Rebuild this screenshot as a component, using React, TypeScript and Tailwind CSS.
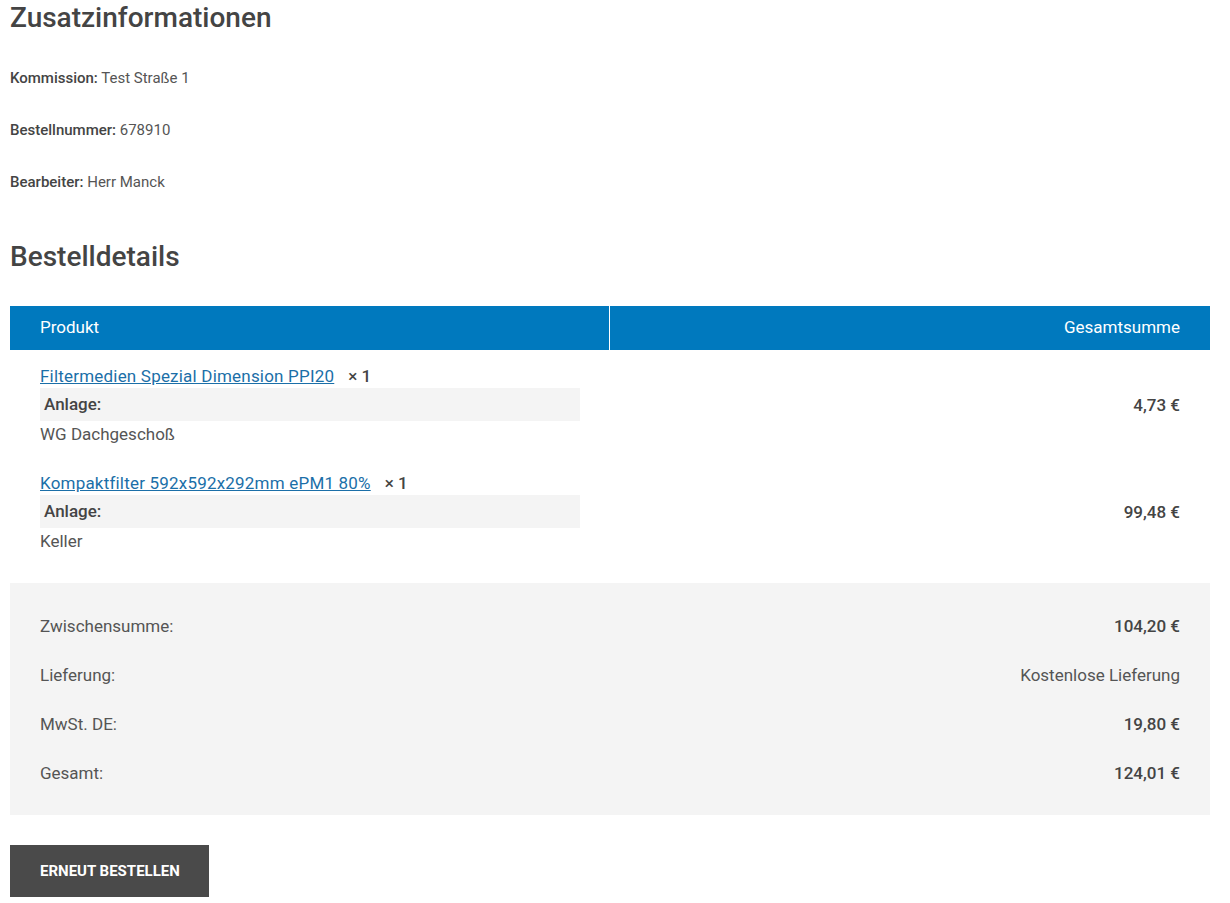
const items = [
  { name: 'Filtermedien Spezial Dimension PPI20', qty: 1, anlage: 'WG Dachgeschoß', total: '4,73 €' },
  { name: 'Kompaktfilter 592x592x292mm ePM1 80%', qty: 1, anlage: 'Keller', total: '99,48 €' },
]

const totals = [
  { label: 'Zwischensumme:', value: '104,20 €', bold: true },
  { label: 'Lieferung:', value: 'Kostenlose Lieferung', bold: false },
  { label: 'MwSt. DE:', value: '19,80 €', bold: true },
  { label: 'Gesamt:', value: '124,01 €', bold: true },
]

export default function App() {
  return (
    <div className="min-h-screen bg-white px-[10px] text-[#555] font-['Roboto','Open_Sans',sans-serif]">
      <h2 className="pt-[2px] text-[28px] leading-[32px] font-medium text-[#444]">Zusatzinformationen</h2>

      <div className="mt-[35px] flex flex-col gap-[34px] text-[15px] leading-[18px]">
        <p><strong className="font-medium text-[#444]">Kommission:</strong> Test Straße 1</p>
        <p><strong className="font-medium text-[#444]">Bestellnummer:</strong> 678910</p>
        <p><strong className="font-medium text-[#444]">Bearbeiter:</strong> Herr Manck</p>
      </div>

      <h2 className="mt-[50px] text-[28px] leading-[32px] font-medium text-[#444]">Bestelldetails</h2>

      <div className="mt-[33px] w-[1200px]">
        <div className="grid grid-cols-2 h-[44px] bg-[#0079be] text-white text-[17px]">
          <div className="flex items-center px-[30px] border-r border-white">Produkt</div>
          <div className="flex items-center justify-end px-[30px]">Gesamtsumme</div>
        </div>

        <div className="flex flex-col pt-[14px] pb-[29px] gap-[24px]">
          {items.map((it) => (
            <div key={it.name} className="flex items-center px-[30px] text-[17px]">
              <div className="w-[540px]">
                <div className="leading-[24px]">
                  <a href="#" className="text-[#1b6fa8] underline tracking-[0.2px]">{it.name}</a>
                  <span className="ml-[14px] font-medium text-[#444]">× {it.qty}</span>
                </div>
                <div className="bg-[#f4f4f4] h-[33px] flex items-center px-[4px] font-medium text-[#444]">Anlage:</div>
                <div className="leading-[26px]">{it.anlage}</div>
              </div>
              <div className="ml-auto font-medium text-[#444]">{it.total}</div>
            </div>
          ))}
        </div>

        <div className="bg-[#f4f4f4] px-[30px] pt-[31px] pb-[30px] flex flex-col gap-[25px] text-[17px]">
          {totals.map((t) => (
            <div key={t.label} className="flex justify-between leading-[24px]">
              <span>{t.label}</span>
              <span className={t.bold ? 'font-medium text-[#444]' : ''}>{t.value}</span>
            </div>
          ))}
        </div>
      </div>

      <button className="mt-[30px] h-[52px] w-[199px] pl-[30px] text-left whitespace-nowrap bg-[#4a4a4a] text-white text-[15px] font-bold uppercase">
        Erneut bestellen
      </button>
    </div>
  )
}
